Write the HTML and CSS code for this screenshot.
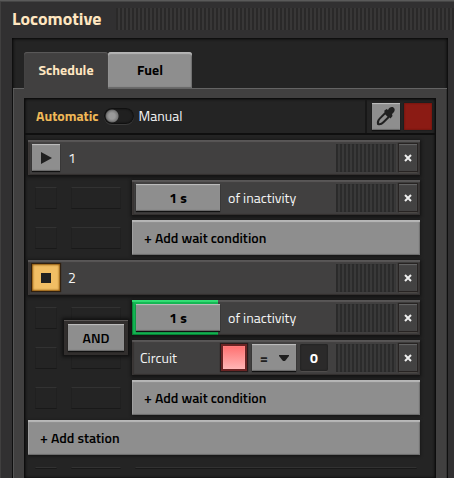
FILE: index.html
```html
<!DOCTYPE html>
<html lang="en">
<head>
<meta charset="utf-8">
<meta name="viewport" content="width=device-width, initial-scale=1">
<title>Locomotive</title>
<link rel="stylesheet" href="styles.css">
</head>
<body>
<main class="window">
  <header class="titlebar">
    <h1>Locomotive</h1>
    <div class="title-grip"></div>
  </header>
  <section class="frame">
    <nav class="tabs">
      <button class="tab tab-active" type="button">Schedule</button>
      <button class="tab" type="button">Fuel</button>
    </nav>
    <div class="panel">
      <div class="schedule">
        <div class="toolbar">
          <div class="mode">
            <label class="mode-auto" for="mode">Automatic</label>
            <input class="switch" id="mode" type="checkbox" role="switch">
            <label for="mode">Manual</label>
          </div>
          <div class="color-tools">
            <button class="tool" type="button" aria-label="Pick color">
              <svg width="20" height="20" viewBox="0 0 20 20"><path d="M2 18c-.5-2 .3-4 1.700-5.400L9.300 7l3.700 3.700-5.600 5.600C6 17.700 4 18.500 2 18z" fill="none" stroke="#202020" stroke-width="2"/><path d="M8 5l2.500-2 1.500 1C13 1.500 15.500.500 17.500 1.500 19.500 3 19 6 16 8l.500 2-2 2.500z" fill="#202020"/></svg>
            </button>
            <button class="swatch" type="button" aria-label="Train color"></button>
          </div>
        </div>
        <div class="list">
          <div class="row">
            <button class="tool" type="button" aria-label="Go to station 1"><svg width="12" height="12" viewBox="0 0 12 12"><path d="M1 0l11 6-11 6z" fill="#202020"/></svg></button>
            <span class="station">1</span>
            <span class="grip"></span>
            <button class="close" type="button" aria-label="Remove"><svg width="8" height="8" viewBox="0 0 8 8"><path d="M1 1l6 6M7 1L1 7" stroke="#eee" stroke-width="2"/></svg></button>
          </div>
          <div class="line">
            <span class="slots"><i></i><i></i></span>
            <div class="row">
              <button class="time" type="button">1 s</button>
              <span class="note">of inactivity</span>
              <span class="grip"></span>
              <button class="close" type="button" aria-label="Remove"><svg width="8" height="8" viewBox="0 0 8 8"><path d="M1 1l6 6M7 1L1 7" stroke="#eee" stroke-width="2"/></svg></button>
            </div>
          </div>
          <div class="line">
            <span class="slots"><i></i><i></i></span>
            <button class="add" type="button">+ Add wait condition</button>
          </div>
          <div class="row">
            <button class="tool tool-on" type="button" aria-label="Stop at station 2"><svg width="10" height="10" viewBox="0 0 10 10"><path d="M0 0h10v10H0z" fill="#202020"/></svg></button>
            <span class="station">2</span>
            <span class="grip"></span>
            <button class="close" type="button" aria-label="Remove"><svg width="8" height="8" viewBox="0 0 8 8"><path d="M1 1l6 6M7 1L1 7" stroke="#eee" stroke-width="2"/></svg></button>
          </div>
          <div class="group">
            <div class="line">
              <span class="slots"><i></i><i></i></span>
              <div class="row">
                <span class="progress" style="width:30%"></span>
                <button class="time" type="button">1 s</button>
                <span class="note">of inactivity</span>
                <span class="grip"></span>
                <button class="close" type="button" aria-label="Remove"><svg width="8" height="8" viewBox="0 0 8 8"><path d="M1 1l6 6M7 1L1 7" stroke="#eee" stroke-width="2"/></svg></button>
              </div>
            </div>
            <div class="line">
              <span class="slots"><i></i><i></i></span>
              <div class="row">
                <span class="kind">Circuit</span>
                <button class="signal" type="button" aria-label="Red signal"></button>
                <span class="compare">
                  <select aria-label="Comparison"><option>=</option><option>&lt;</option><option>&gt;</option></select>
                  <svg width="10" height="6" viewBox="0 0 10 6"><path d="M0 0h10v1L6 6H4L0 1z" fill="#202020"/></svg>
                </span>
                <input class="value" type="text" value="0" aria-label="Value">
                <span class="grip"></span>
                <button class="close" type="button" aria-label="Remove"><svg width="8" height="8" viewBox="0 0 8 8"><path d="M1 1l6 6M7 1L1 7" stroke="#eee" stroke-width="2"/></svg></button>
              </div>
            </div>
            <div class="joiner"><button type="button">AND</button></div>
          </div>
          <div class="line">
            <span class="slots"><i></i><i></i></span>
            <button class="add" type="button">+ Add wait condition</button>
          </div>
          <button class="add" type="button">+ Add station</button>
          <div class="line">
            <span class="slots"><i></i><i></i></span>
            <span class="slots slots-wide"><i></i></span>
          </div>
        </div>
      </div>
    </div>
  </section>
</main>
</body>
</html>
```
FILE: styles.css
```css
* { box-sizing: border-box; }

body {
  margin: 0;
  background: #313031;
  color: #f4f4f4;
  font: 14px/20px "Titillium Web", Roboto, "Liberation Sans", sans-serif;
}

button, input, select {
  margin: 0;
  padding: 0;
  border: 0;
  border-radius: 0;
  color: inherit;
  font: inherit;
}

h1 {
  margin: 0;
  color: #ffe6c0;
  font-size: 18px;
  font-weight: 700;
  line-height: 24px;
}

svg { display: block; }

.window {
  display: flex;
  flex-direction: column;
  height: 100vh;
  padding: 6px 6px 0 12px;
  overflow: hidden;
  background: #313031;
  box-shadow: inset 0 1px #5a5a5a, inset 0 2px #454545, inset 1px 0 #403f3f;
}

.titlebar {
  display: flex;
  align-items: center;
  gap: 14px;
  height: 26px;
  margin: 0 -6px 6px 0;
}

.title-grip {
  flex: 1;
  height: 22px;
  background: repeating-linear-gradient(90deg, #2a2929 0 2px, #383737 2px 4px);
}

.frame {
  display: flex;
  flex: 1;
  flex-direction: column;
  min-height: 0;
  padding: 14px 1px 0;
  background: #242424;
  box-shadow: inset 0 0 3px 1px #050505;
}

.tabs {
  display: flex;
  padding-left: 11px;
}

.tab {
  width: 84px;
  height: 36px;
  border-radius: 3px 3px 0 0;
  background: #8e8e8e;
  box-shadow: inset 0 2px 1px #b5b5b5, inset -1px -1px 1px #666;
  color: #000;
  font-weight: 700;
}

.tab-active {
  position: relative;
  z-index: 1;
  background: #414040;
  box-shadow: inset 0 1px 1px #5d5b5b, 0 1px #414040;
  color: #ffe6c0;
}

.panel {
  display: flex;
  flex: 1;
  min-height: 0;
  padding: 10px 11px 0;
  background: #414040;
  box-shadow: inset 0 1px #646464, inset 1px 0 #555, inset -1px 0 #333;
}

.schedule {
  display: flex;
  flex: 1;
  flex-direction: column;
  min-width: 0;
  border: 1px solid #0d0d0d;
  border-bottom: 0;
  background: #242424;
  box-shadow: inset 0 0 3px #000;
}

.toolbar {
  display: flex;
  flex-shrink: 0;
  height: 36px;
  border-bottom: 2px solid #0f0f0f;
}

.mode {
  display: flex;
  flex: 1;
  align-items: center;
  gap: 5px;
  padding-left: 11px;
}

.mode-auto {
  color: #f0b957;
  font-weight: 700;
}

.switch {
  appearance: none;
  width: 30px;
  height: 16px;
  border-radius: 8px;
  background: radial-gradient(circle at 8px 8px, #999 0 3px, #777 6px, transparent 7px), #202020;
  box-shadow: inset 0 0 2px 1px #0c0c0c, 0 1px #3a3a3a;
}

.color-tools {
  display: flex;
  align-items: center;
  gap: 4px;
  padding: 0 3px 0 5px;
  border-left: 2px solid #171717;
}

.tool {
  display: grid;
  flex-shrink: 0;
  place-items: center;
  width: 28px;
  height: 27px;
  background: #8e8e8e;
  box-shadow: inset 0 1px 1px #c0c0c0, inset 0 -1px 1px #666, 0 1px 1px #111;
}

.tool-on {
  background: #f1be64;
  box-shadow: inset 0 0 2px 1px #8a550c, 0 0 1px 1px #302010;
}

.swatch {
  width: 28px;
  height: 27px;
  background: #8b1b14;
  box-shadow: inset 0 0 2px #561009, 0 0 1px #111;
}

.list {
  display: flex;
  flex: 1;
  flex-direction: column;
  gap: 5px;
  min-height: 0;
  padding: 5px 15px 0 3px;
  overflow: hidden;
}

.row {
  position: relative;
  display: flex;
  flex-shrink: 0;
  align-items: center;
  height: 35px;
  padding: 0 3px 0 4px;
  background: #414040;
  box-shadow: inset 0 2px 1px #595757, inset 2px 0 1px #383534, inset -1px -1px 1px #332f2e, 0 1px 3px 1px #121212;
}

.station { margin-left: 8px; }

.line {
  display: grid;
  flex-shrink: 0;
  grid-template-columns: 104px 1fr;
}

.group {
  position: relative;
  display: grid;
  flex-shrink: 0;
  gap: 5px;
}

.slots {
  display: grid;
  grid-template-columns: 22px 50px;
  gap: 14px;
  padding: 7px 0 6px 7px;
}

.slots i {
  border: 1px solid #202020;
  border-top-color: #323232;
  border-bottom-color: #191919;
}

.slots-wide {
  grid-template-columns: 1fr;
  padding: 7px 3px 6px;
}

.time {
  position: relative;
  width: 84px;
  height: 27px;
  background: #8e8e8e;
  box-shadow: inset 0 1px 1px #c0c0c0, inset 0 -1px 1px #666, 0 1px 1px #111;
  color: #000;
  font-weight: 700;
}

.progress {
  position: absolute;
  inset: 0 auto 0 0;
  background: #13b653;
  box-shadow: inset 0 2px 1px #35df76, inset 1px -1px 1px #087a32;
}

.note { margin: 0 8px; }

.kind { margin: 0 4px; }

.grip {
  width: 60px;
  height: 28px;
  margin: 0 3px 0 auto;
  background: repeating-linear-gradient(90deg, #2b2b2b 0 2px, #393939 2px 4px);
  box-shadow: inset 0 0 1px #2b2928;
}

.close {
  display: grid;
  place-items: center;
  width: 18px;
  height: 27px;
  background: #434242;
  box-shadow: inset 0 1px 1px #666, 0 0 1px 1px #272322, 0 2px #53504e;
}

.add {
  flex-shrink: 0;
  height: 35px;
  padding: 0 12px;
  background: #8e8e8e;
  box-shadow: inset 0 2px 1px #b8b8b8, inset -1px -1px 1px #6a6a6a, inset 1px 0 #9d9d9d, 0 1px 3px #121212;
  color: #000;
  font-weight: 600;
  text-align: left;
}

.signal {
  width: 26px;
  height: 27px;
  margin: 0 5px 0 auto;
  border: 2px solid #6b2424;
  background: linear-gradient(#ff7070, #ffb5b5);
  box-shadow: inset 0 0 1px #ffd0d0, 0 0 1px 1px #251b1b;
}

.compare {
  position: relative;
  width: 44px;
}

.compare select {
  display: block;
  appearance: none;
  width: 100%;
  height: 27px;
  padding-left: 8px;
  background: #8e8e8e;
  box-shadow: inset 0 1px 1px #c0c0c0, inset 0 -1px 1px #666, 0 1px 1px #111;
  color: #202020;
  font-weight: 700;
}

.compare svg {
  position: absolute;
  top: 11px;
  right: 7px;
  pointer-events: none;
}

.value {
  width: 28px;
  height: 27px;
  margin: 0 8px 0 4px;
  border-radius: 2px;
  background: #2b2a2a;
  box-shadow: inset 0 0 2px #171717, 0 1px #504d4c;
  color: #fff;
  font-weight: 700;
  text-align: center;
}

.compare ~ .grip { margin-left: 0; }

.joiner {
  position: absolute;
  top: 20px;
  left: 36px;
  padding: 4px;
  background: #312e2d;
  box-shadow: inset 0 1px #5a5655, 0 0 3px 2px #111;
}

.joiner button {
  display: block;
  width: 56px;
  height: 27px;
  background: #8e8e8e;
  box-shadow: inset 0 1px 1px #c0c0c0, inset 0 -1px 1px #666, 0 1px 1px #111;
  color: #000;
  font-weight: 600;
}
```
